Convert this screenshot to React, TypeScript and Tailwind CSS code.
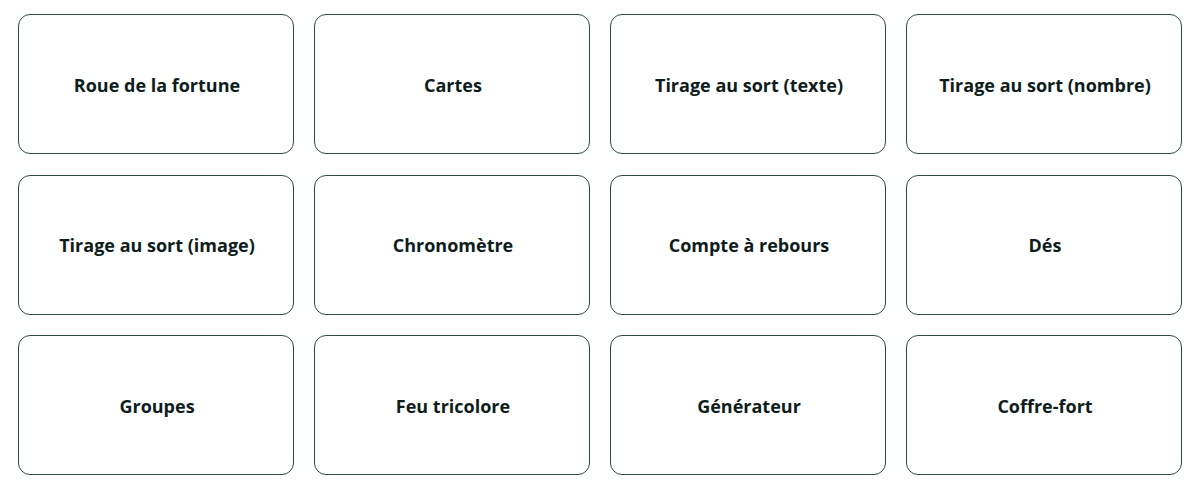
const tools = [
  "Roue de la fortune",
  "Cartes",
  "Tirage au sort (texte)",
  "Tirage au sort (nombre)",
  "Tirage au sort (image)",
  "Chronomètre",
  "Compte à rebours",
  "Dés",
  "Groupes",
  "Feu tricolore",
  "Générateur",
  "Coffre-fort",
];

export default function App() {
  return (
    <div
      className="min-h-screen bg-white px-[18px] pt-[14px]"
      style={{ fontFamily: '"Open Sans", "Noto Sans", sans-serif' }}
    >
      <div className="grid grid-cols-4 gap-x-5 gap-y-[20.5px]">
        {tools.map((t) => (
          <button
            key={t}
            type="button"
            className="h-[140px] rounded-xl border border-[#2f4a48] bg-white flex items-center justify-center pt-[2px] pl-[2px] text-[18px] font-bold text-[#0f1c1c]"
          >
            {t}
          </button>
        ))}
      </div>
    </div>
  );
}
